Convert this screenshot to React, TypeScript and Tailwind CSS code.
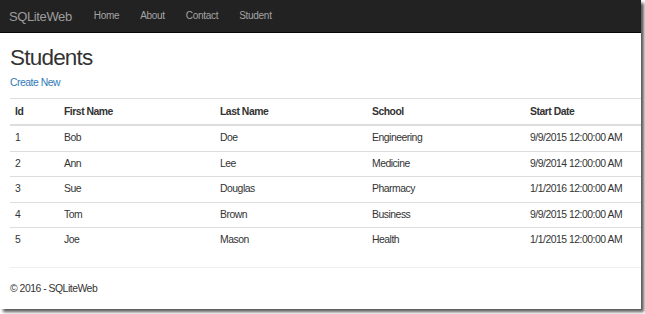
import * as React from "react";

const students = [
    { id: 1, first: "Bob", last: "Doe", school: "Engineering", start: "9/9/2015 12:00:00 AM" },
    { id: 2, first: "Ann", last: "Lee", school: "Medicine", start: "9/9/2014 12:00:00 AM" },
    { id: 3, first: "Sue", last: "Douglas", school: "Pharmacy", start: "1/1/2016 12:00:00 AM" },
    { id: 4, first: "Tom", last: "Brown", school: "Business", start: "9/9/2015 12:00:00 AM" },
    { id: 5, first: "Joe", last: "Mason", school: "Health", start: "1/1/2015 12:00:00 AM" },
];

export default function App() {
    return (
        <div className="w-[645px] h-[314px] bg-white font-['Liberation_Sans',Arial,sans-serif] text-[#333]">
            <div className="w-[641px] h-[309px] overflow-hidden bg-white shadow-[3px_3px_3px_rgba(0,0,0,0.65)]">
                {/* navbar */}
                <nav className="h-[33px] bg-[#222] border-b border-[#080808] flex items-center">
                    <span className="pl-[9px] text-[13px] tracking-[-0.03em] text-[#9d9d9d] leading-none mr-[22px]">SQLiteWeb</span>
                    <div className="flex gap-[21px] text-[10px] tracking-[-0.03em] text-[#a4a4a4] leading-none">
                        <a>Home</a>
                        <a>About</a>
                        <a>Contact</a>
                        <a>Student</a>
                    </div>
                </nav>

                <div className="pl-[10px] tracking-[-0.03em]">
                    <h2 className="mt-[13px] text-[22.5px] tracking-[-0.035em] leading-[23px]">Students</h2>
                    <p className="mt-[7px] text-[10.4px] leading-[14px]">
                        <a className="text-[#337ab7]">Create New</a>
                    </p>

                    <table className="mt-[8px] w-[631px] table-fixed border-collapse text-[10.4px]">
                        <colgroup>
                            <col className="w-[49px]" />
                            <col className="w-[156px]" />
                            <col className="w-[152px]" />
                            <col className="w-[158px]" />
                            <col />
                        </colgroup>
                        <thead>
                            <tr className="border-t border-[#ddd] border-b-2">
                                <th className="text-left font-bold pl-[5px] py-[5px] leading-[15px]">Id</th>
                                <th className="text-left font-bold pl-[5px] py-[5px] leading-[15px]">First Name</th>
                                <th className="text-left font-bold pl-[5px] py-[5px] leading-[15px]">Last Name</th>
                                <th className="text-left font-bold pl-[5px] py-[5px] leading-[15px]">School</th>
                                <th className="text-left font-bold pl-[5px] py-[5px] leading-[15px]">Start Date</th>
                            </tr>
                        </thead>
                        <tbody>
                            {students.map((s, i) => (
                                <tr key={s.id} className={i === 0 ? "" : "border-t border-[#ddd]"}>
                                    <td className="pl-[5px] py-[5px] leading-[14.5px]">{s.id}</td>
                                    <td className="pl-[5px] py-[5px] leading-[14.5px]">{s.first}</td>
                                    <td className="pl-[5px] py-[5px] leading-[14.5px]">{s.last}</td>
                                    <td className="pl-[5px] py-[5px] leading-[14.5px]">{s.school}</td>
                                    <td className="pl-[5px] py-[5px] leading-[14.5px] whitespace-nowrap">{s.start}</td>
                                </tr>
                            ))}
                        </tbody>
                    </table>

                    <hr className="mt-[14px] border-t border-[#eee]" />
                    <footer className="mt-[14px] text-[10.4px] leading-[14px]">© 2016 - SQLiteWeb</footer>
                </div>
            </div>
        </div>
    );
}
